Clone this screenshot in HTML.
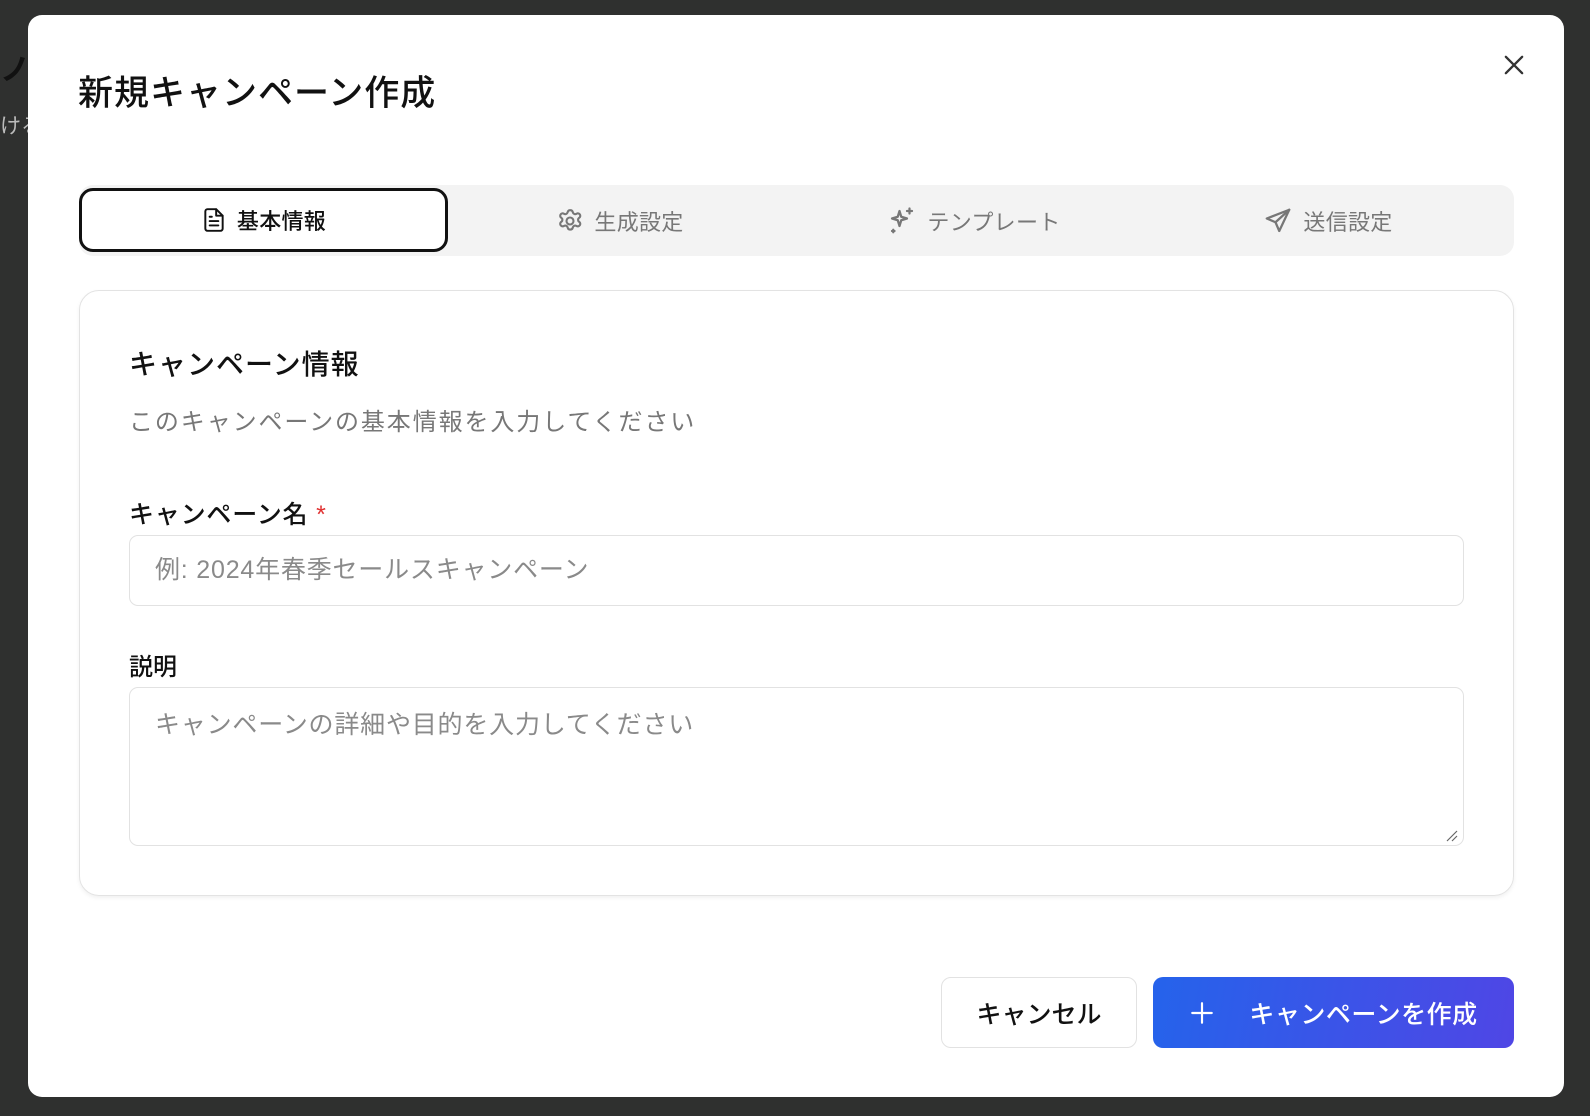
<!DOCTYPE html>
<html><head><meta charset="utf-8"><style>
*{box-sizing:border-box;margin:0;padding:0}
body{width:1590px;height:1116px;background:#2f302f;font-family:"Liberation Sans","Noto Sans CJK JP",sans-serif;position:relative;overflow:hidden;color:#111}
.abs{position:absolute}
.modal{left:28px;top:15px;width:1536px;height:1082px;background:#fff;border-radius:14px}
.title{left:78px;top:72px;font-size:35px;font-weight:500;line-height:44px;letter-spacing:1px}
.tabs{left:79px;top:185px;width:1435px;height:71px;background:#f3f3f3;border-radius:14px}
.tab{top:0;height:71px;display:flex;align-items:center;justify-content:center;gap:10px;font-size:22px;color:#777;width:358px;letter-spacing:.3px}
.active{left:79px;top:188px;width:369px;height:64px;border:3px solid #111;border-radius:14px;background:#fff;display:flex;align-items:center;justify-content:center;gap:10px;font-size:22px;color:#111;font-weight:500;letter-spacing:.3px}
.card{left:79px;top:290px;width:1435px;height:606px;border:1.5px solid #e3e3e3;border-radius:20px;box-shadow:0 2px 4px rgba(0,0,0,.06)}
.input{left:129px;width:1335px;border:1.5px solid #e2e2e2;border-radius:9px;color:#8a8a8a;font-size:25px;padding-left:25px;letter-spacing:.8px}
.btn{top:977px;height:71px;border-radius:10px;display:flex;align-items:center;justify-content:center;font-size:25px;font-weight:500}
</style></head><body>
<div class="abs" style="left:0;top:45px;font-size:30px;color:#111;font-weight:700">ノ</div>
<div class="abs" style="left:0;top:110px;font-size:21px;color:#bbb">けるる</div>
<div class="abs modal"></div>
<div class="abs title">新規キャンペーン作成</div>
<svg class="abs" style="left:1500px;top:51px" width="28" height="28" viewBox="0 0 24 24" fill="none" stroke="#333" stroke-width="2" stroke-linecap="round"><path d="M5 5l14 14M19 5L5 19"/></svg>
<div class="abs tabs">
 <div class="abs tab" style="left:362px"><svg width="28" height="28" viewBox="0 0 24 24" fill="none" stroke="#777" stroke-width="1.8" stroke-linecap="round" stroke-linejoin="round"><path d="M12.2 2.7h.2a2 2 0 011.9 1.4l.2.6a2 2 0 002.8 1.2l.6-.3a2 2 0 012.5.8l.1.1a2 2 0 01-.4 2.6l-.5.4a2 2 0 000 3l.5.4a2 2 0 01.4 2.6l-.1.1a2 2 0 01-2.5.8l-.6-.3a2 2 0 00-2.8 1.2l-.2.6a2 2 0 01-1.9 1.4h-.4a2 2 0 01-1.9-1.4l-.2-.6a2 2 0 00-2.8-1.2l-.6.3a2 2 0 01-2.5-.8l-.1-.1a2 2 0 01.4-2.6l.5-.4a2 2 0 000-3l-.5-.4a2 2 0 01-.4-2.6l.1-.1a2 2 0 012.5-.8l.6.3a2 2 0 002.8-1.2l.2-.6a2 2 0 011.9-1.4z"/><circle cx="12" cy="12" r="3"/></svg>生成設定</div>
 <div class="abs tab" style="left:716px"><svg width="30" height="30" viewBox="0 0 24 24" fill="none" stroke="#777" stroke-width="1.8" stroke-linecap="round" stroke-linejoin="round"><path d="M10 4l1.4 4.6L16 10l-4.6 1.4L10 16l-1.4-4.6L4 10l4.6-1.4z"/><path d="M18 2v4M16 4h4M5 19v2M4 20h2"/></svg>テンプレート</div>
 <div class="abs tab" style="left:1070px"><svg width="30" height="30" viewBox="0 0 24 24" fill="none" stroke="#777" stroke-width="1.8" stroke-linecap="round" stroke-linejoin="round"><path d="M21 3L3 10l7 3 3 7z"/><path d="M21 3L10 13"/></svg>送信設定</div>
</div>
<div class="abs active"><svg width="26" height="28" viewBox="0 0 24 24" fill="none" stroke="#111" stroke-width="1.8" stroke-linecap="round" stroke-linejoin="round"><path d="M14 2H6a2 2 0 00-2 2v16a2 2 0 002 2h12a2 2 0 002-2V8z"/><path d="M14 2v6h6M8 13h8M8 17h8M8 9h2"/></svg>基本情報</div>
<div class="abs card"></div>
<div class="abs" style="left:129px;top:343px;font-size:28px;font-weight:500;letter-spacing:1px">キャンペーン情報</div>
<div class="abs" style="left:129px;top:402px;font-size:24px;color:#777;letter-spacing:1.9px">このキャンペーンの基本情報を入力してください</div>
<div class="abs" style="left:129px;top:495px;font-size:25px;font-weight:500;letter-spacing:.8px">キャンペーン名 <span style="color:#e03131">*</span></div>
<div class="abs input" style="top:535px;height:71px;line-height:68px">例: 2024年春季セールスキャンペーン</div>
<div class="abs" style="left:129px;top:647px;font-size:24px;font-weight:500">説明</div>
<div class="abs input" style="top:687px;height:159px;padding-top:17px">キャンペーンの詳細や目的を入力してください</div>
<svg class="abs" style="left:1446px;top:830px" width="12" height="12" viewBox="0 0 12 12" stroke="#666" stroke-width="1.2"><path d="M1 11L11 1M6 11l5-5"/></svg>
<div class="abs btn" style="left:941px;width:196px;border:1.5px solid #e2e2e2;background:#fff;color:#111">キャンセル</div>
<div class="abs btn" style="left:1153px;width:361px;background:linear-gradient(100deg,#2563eb,#4f46e5);color:#fff;gap:34px"><svg width="26" height="26" viewBox="0 0 24 24" stroke="#fff" stroke-width="2" stroke-linecap="round"><path d="M12 3v18M3 12h18"/></svg><span style="letter-spacing:.5px">キャンペーンを作成</span></div>
</body></html>
